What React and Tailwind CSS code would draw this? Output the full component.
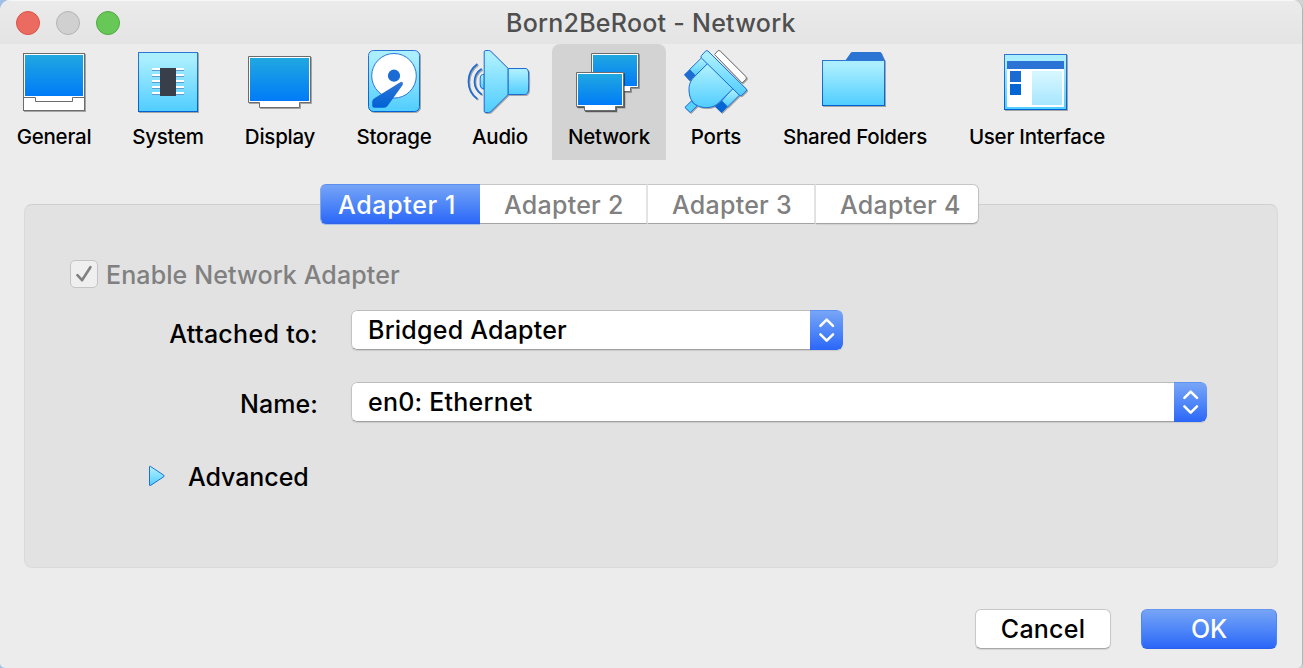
import React from 'react';

function Defs() {
  return (
    <svg width="0" height="0" className="absolute" aria-hidden="true">
      <defs>
        <linearGradient id="screen" x1="0" y1="0" x2="0" y2="1">
          <stop offset="0" stopColor="#20a8e0" />
          <stop offset="1" stopColor="#007bf8" />
        </linearGradient>
        <linearGradient id="sky" x1="0" y1="0" x2="0" y2="1">
          <stop offset="0.1" stopColor="#abefff" />
          <stop offset="1" stopColor="#50cdff" />
        </linearGradient>
        <linearGradient id="edge" x1="0" y1="0" x2="0" y2="1">
          <stop offset="0" stopColor="#2e75d6" />
          <stop offset="1" stopColor="#0061d5" />
        </linearGradient>
        <linearGradient id="pale" x1="0" y1="0" x2="0" y2="1">
          <stop offset="0.1" stopColor="#d4f6ff" />
          <stop offset="1" stopColor="#a8e6ff" />
        </linearGradient>
      </defs>
    </svg>
  );
}

function Icon({ children }) {
  return (
    <svg
      width="72"
      height="68"
      viewBox="0 0 72 68"
      className="block shrink-0 drop-shadow-[1px_1px_0.3px_rgba(0,0,0,0.3)]"
    >
      {children}
    </svg>
  );
}

const GeneralIcon = () => (
  <Icon>
    <rect x="5.5" y="5.5" width="61" height="57" fill="#fff" stroke="#6c6c6c" />
    <rect x="7" y="7" width="58" height="41" fill="url(#screen)" />
    <path d="M5.5 49.5H17.5V53.5H54.5V49.5H66.5" fill="none" stroke="#6c6c6c" />
  </Icon>
);

const SystemIcon = () => (
  <Icon>
    <rect x="6.5" y="4.5" width="59" height="59" fill="url(#sky)" stroke="url(#edge)" />
    {[20, 26, 32, 38, 44].map((y) => (
      <g key={y}>
        <rect x="20" y={y} width="32" height="2" fill="#fff" />
        <rect x="20" y={y + 2} width="32" height="1" fill="#5c9fd0" />
      </g>
    ))}
    <rect x="28" y="20" width="16" height="28" fill="#393f4a" />
  </Icon>
);

const DisplayIcon = () => (
  <Icon>
    <path d="M4.5 8.5H66.5V54.5H55.5V59.5H15.5V54.5H4.5Z" fill="#fff" stroke="#6c6c6c" />
    <rect x="6" y="10" width="59" height="43" fill="url(#screen)" />
  </Icon>
);

const StorageIcon = () => (
  <Icon>
    <rect x="10.5" y="2.5" width="51" height="61" rx="5" fill="url(#sky)" stroke="url(#edge)" />
    <circle cx="36" cy="27.8" r="22.3" fill="#fff" stroke="#2b77d8" />
    <circle cx="36" cy="27.7" r="6.1" fill="#1a6cd4" />
    <path
      d="M42.3 34.3Q45.8 33.2 44.6 37L29.7 57.7Q28.2 59.7 26 59.7H16Q14.2 59.5 14.2 57.5V53.5Q14.3 51.5 16.5 50.2Z"
      fill="url(#edge)"
    />
  </Icon>
);

const AudioIcon = () => (
  <Icon>
    <g transform="translate(-0.3 0)">
      <path d="M20.5 26.5H19Q16.5 27 16.5 30V37Q16.5 40 19 40.5H20.5Z" fill="url(#sky)" stroke="#1b6cd4" />
      <path
        d="M20.5 4Q20.5 2.5 22 2.5H25Q26.3 2.5 27.2 3.4L44.5 20.5V46.5L27.2 63.6Q26 64.5 24.8 64.5H22Q20.5 64.5 20.5 63Z"
        fill="url(#sky)"
        stroke="#1b6cd4"
      />
      <path
        d="M44.5 20.5H62.5Q64.3 21 64.8 24Q65.2 33.5 64.8 42Q64.3 46.5 61 46.5H44.5Z"
        fill="url(#sky)"
        stroke="#1b6cd4"
      />
      <path d="M18 20.7C8.4 27 8.4 40 18 46.5" fill="none" stroke="#1b6cd4" strokeWidth="1.7" />
      <path d="M13.7 16C1.8 24.5 1.8 42.5 13.7 51" fill="none" stroke="#1b6cd4" strokeWidth="1.7" />
    </g>
  </Icon>
);

const NetworkIcon = () => (
  <Icon>
    <path d="M18.5 5.5H65.5V39.5H57.5V43.5H24.5V39.5H18.5Z" fill="#fff" stroke="#6c6c6c" />
    <rect x="20" y="7" width="44" height="31" fill="url(#screen)" />
    <path
      d="M3.5 24.5H50.5V58.5H42.5V62.5H11.5V58.5H3.5Z"
      fill="#fff"
      stroke="#6c6c6c"
      className="drop-shadow-[1px_1px_0.3px_rgba(0,0,0,0.4)]"
    />
    <rect x="5" y="26" width="44" height="31" fill="url(#screen)" />
  </Icon>
);

const PortsIcon = () => (
  <Icon>
    <g transform="translate(-0.4 0)">
      <path d="M35 6.5L38 3Q39.3 1.9 40.6 3L66.3 28.6Q67.4 30 66.3 31.2L62.5 35Z" fill="#fff" stroke="#6c6c6c" />
      <path d="M10 21.5L22.5 9.3L28.5 15.3L15.7 27.9Z" fill="url(#sky)" stroke="#1b6cd4" />
      <path d="M4.3 26.7L10 21.3L15.9 27.5L10.3 33.3Z" fill="#1f6dd3" />
      <path d="M53 40.3L60 47L48 58.9L42 53Z" fill="url(#sky)" stroke="#1b6cd4" />
      <path d="M42 52.8L48 58.8L42 65L35.2 58.5Z" fill="#0565d5" />
      <path d="M5.3 59.4L11.7 53L17.3 58L10.7 64.6Z" fill="#58d0ff" stroke="#1b6cd4" />
      <path
        d="M28.3 15.3L14.7 28.8C10.5 33 9.3 37 9.4 42C9.6 46 10 50 13.2 54.2C17 58.3 22 59.6 27 59.6C33 59.5 36.5 57.5 39.8 54.2L53.3 40.7Z"
        fill="url(#sky)"
        stroke="#1b6cd4"
      />
      <path
        d="M21.8 7.7L26 3.1Q27.2 2 28.4 3.1L66.5 40.8Q67.6 42 66.5 43.2L62.3 47.2Q61 48.2 59.8 47.2L21.8 10Q20.8 8.8 21.8 7.7Z"
        fill="url(#sky)"
        stroke="#1b6cd4"
      />
    </g>
  </Icon>
);

const FolderIcon = () => (
  <Icon>
    <path d="M26 13L31.6 5Q32.2 4 33.4 4H61Q62 4 62.4 5L66 13Z" fill="#2c74d3" />
    <rect x="3.5" y="12.5" width="62" height="45" fill="url(#sky)" stroke="url(#edge)" />
  </Icon>
);

const InterfaceIcon = () => (
  <Icon>
    <rect x="3.5" y="6.5" width="62" height="55" fill="url(#sky)" stroke="url(#edge)" />
    <rect x="6" y="21" width="57" height="38" fill="#fff" />
    <rect x="6" y="13" width="57" height="8" fill="#2b73d4" />
    <rect x="9" y="23" width="11" height="11" fill="#1a6cd3" />
    <rect x="9" y="36" width="11" height="11" fill="#0565d5" />
    <rect x="31" y="23" width="30" height="34" fill="url(#pale)" />
  </Icon>
);

const tools = [
  { label: 'General', icon: GeneralIcon, cls: 'w-[108px]' },
  { label: 'System', icon: SystemIcon, cls: 'w-[120px]' },
  { label: 'Display', icon: DisplayIcon, cls: 'w-[104px]' },
  { label: 'Storage', icon: StorageIcon, cls: 'w-[124px]' },
  { label: 'Audio', icon: AudioIcon, cls: 'mr-2 w-[88px]' },
  { label: 'Network', icon: NetworkIcon, cls: 'w-[114px] rounded-t-lg bg-[#d3d3d3]' },
  { label: 'Ports', icon: PortsIcon, cls: 'w-[100px]' },
  { label: 'Shared Folders', icon: FolderIcon, cls: 'w-[178px]' },
  { label: 'User Interface', icon: InterfaceIcon, cls: 'w-[186px]' },
];

function Tool({ label, icon: Glyph, cls }) {
  return (
    <button className={`flex h-[116px] shrink-0 flex-col items-center pt-1 ${cls}`}>
      <Glyph />
      <span className="mt-[5px] text-[20.5px] leading-[31px] font-[540] tracking-[-0.24px] whitespace-nowrap">
        {label}
      </span>
    </button>
  );
}

const tabBase = 'flex h-10 items-center border-y border-t-[#c6c6c6] border-b-[#a3a3a3] bg-white pt-0.5 text-[#808080]';

function Tabs() {
  return (
    <div className="relative ml-[320px] flex w-[659px] text-[25px] tracking-[0.25px] whitespace-nowrap">
      <div className="flex h-10 w-[160px] items-center rounded-l-md border border-r-0 border-t-[#5c8fee] border-b-[#2f63e8] border-l-[#7fa9ee] bg-linear-to-b from-[#76a4f6] to-[#2b66f8] pt-0.5 pl-[17px] tracking-[0.65px] text-white shadow-[0_1px_0_#a3bfea]">
        Adapter 1
      </div>
      <div className={`${tabBase} w-[168px] border-r-2 border-r-[#e3e3e3] pl-6`}>Adapter 2</div>
      <div className={`${tabBase} w-[168px] border-r-2 border-r-[#e3e3e3] pl-6`}>Adapter 3</div>
      <div className={`${tabBase} w-[163px] rounded-r-md border-r border-r-[#c0c0c0] pl-6 shadow-[0_1px_1px_rgba(0,0,0,0.08)]`}>
        Adapter 4
      </div>
    </div>
  );
}

function Select({ value, cls }) {
  return (
    <div className={`flex h-10 overflow-hidden rounded-md shadow-[0_1px_1px_rgba(0,0,0,0.1)] ${cls}`}>
      <div className="flex flex-1 items-center rounded-l-md border border-r-0 border-t-[#bcbcbc] border-b-[#a0a0a0] border-l-[#c2c2c2] bg-white pl-4 whitespace-nowrap">
        {value}
      </div>
      <div className="flex w-[33px] items-center justify-center rounded-r-md border-t border-[#5d93f0] bg-linear-to-b from-[#78a5f6] to-[#2b66f8]">
        <svg width="18" height="28" viewBox="0 0 18 28" fill="none" stroke="#fff" strokeWidth="2.6" strokeLinecap="round" strokeLinejoin="round">
          <path d="M2.4 8.9L8.7 2.6L15 8.9M2.4 17.3L8.7 23.6L15 17.3" />
        </svg>
      </div>
    </div>
  );
}

export default function App() {
  return (
    <div className="h-[668px] w-[1304px] overflow-hidden bg-linear-to-r from-[#9fbfe6] from-50% to-[#d2d2d2] to-50% font-['Inter','Liberation_Sans',sans-serif] font-[450] text-black">
      <Defs />
      <div className="flex h-full w-[1303px] flex-col overflow-hidden rounded-t-[10px] rounded-b-[5px] border-r border-[#b4b4b4] bg-[#ececec]">
        <header className="flex h-11 shrink-0 items-center border-t border-t-[#f7f7f7] bg-linear-to-b from-[#ebebeb] to-[#e4e4e4] pl-4">
          <div className="flex gap-4">
            <span className="size-6 rounded-full border border-[#dd5147] bg-[#ec6b60]" />
            <span className="size-6 rounded-full border border-[#b4b4b4] bg-[#d0d0d0]" />
            <span className="size-6 rounded-full border border-[#53a93f] bg-[#67c857]" />
          </div>
          <h1 className="ml-[386px] pt-0.5 text-[25px] tracking-[0.25px] whitespace-nowrap text-[#4f4f4f]">
            Born2BeRoot - Network
          </h1>
        </header>

        <nav className="flex h-[116px] shrink-0">
          {tools.map((t) => (
            <Tool key={t.label} {...t} />
          ))}
        </nav>

        <main className="pt-6 text-[25px] leading-10 tracking-[0.22px]">
          <Tabs />
          <section className="-mt-5 ml-6 h-[364px] w-[1254px] rounded-lg border border-[#dadada] border-t-[#cfcfcf] bg-[#e2e2e2] pt-[50px]">
            <div className="flex h-10 items-center pl-[45px] text-[#808080]">
              <span className="mb-0.5 flex size-7 items-center justify-center rounded-[5px] border border-[#c4c4c4] bg-[#efefef]">
                <svg width="20" height="20" viewBox="0 0 20 20" fill="none" stroke="#808080" strokeWidth="2.6" strokeLinecap="round" strokeLinejoin="round">
                  <path d="M3.4 11.2L8 16.2L16.4 3.2" />
                </svg>
              </span>
              <span className="ml-2 tracking-[0.11px]">Enable Network Adapter</span>
            </div>
            <div className="mt-[15px] flex h-10">
              <span className="mr-[33px] w-[293px] pt-1 text-right tracking-[0.3px]">Attached to:</span>
              <Select value="Bridged Adapter" cls="w-[492px]" />
            </div>
            <div className="mt-8 flex h-10">
              <span className="mr-[33px] w-[293px] pt-0.5 text-right tracking-[0.1px]">Name:</span>
              <Select value="en0: Ethernet" cls="w-[856px]" />
            </div>
            <div className="mt-[35px] flex h-10 items-center pl-[123px] tracking-[-0.05px]">
              <svg width="18" height="22" viewBox="0 0 18 22" className="mb-0.5">
                <path d="M1.5 2Q1.5 0.8 2.6 1.5L15.8 10.2Q16.6 11 15.8 11.7L2.6 20.4Q1.5 21.1 1.5 20Z" fill="url(#sky)" stroke="#1b70d4" />
              </svg>
              <span className="ml-[22px]">Advanced</span>
            </div>
          </section>
          <footer className="mt-[41px] mr-[25px] flex justify-end gap-[30px]">
            <button className="h-10 w-[136px] rounded-md border border-[#c8c8c8] border-b-[#a8a8a8] bg-white shadow-[0_1px_1px_rgba(0,0,0,0.1)]">
              <span className="block leading-[38px]">Cancel</span>
            </button>
            <button className="h-10 w-[136px] rounded-md border border-[#4c86ee] border-t-[#6697f0] border-b-[#2a60ea] bg-linear-to-b from-[#76a4f6] to-[#2b66f8] tracking-[-0.2px] text-white">
              <span className="block leading-[38px]">OK</span>
            </button>
          </footer>
        </main>
      </div>
    </div>
  );
}
